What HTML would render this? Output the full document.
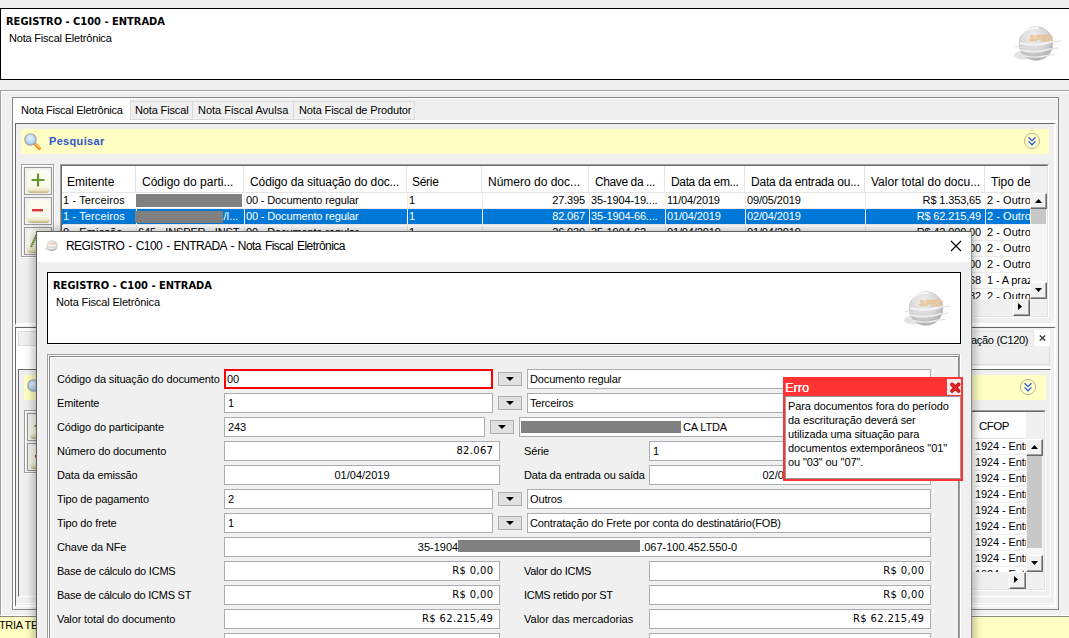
<!DOCTYPE html>
<html lang="pt-BR">
<head>
<meta charset="utf-8">
<title>REGISTRO - C100 - ENTRADA</title>
<style>
*{box-sizing:border-box;margin:0;padding:0}
html,body{width:1069px;height:638px;overflow:hidden;background:#f0f0f0}
body{position:relative;font-family:"Liberation Sans",Arial,sans-serif;font-size:11px;letter-spacing:-0.14px;color:#000;line-height:13px}
.a{position:absolute;white-space:nowrap}
.hl{position:absolute;height:1px}
.vl{position:absolute;width:1px}
.tt{font-family:"DejaVu Sans Condensed","DejaVu Sans","Liberation Sans",sans-serif;font-weight:bold;font-size:11px;letter-spacing:0}
.seg{font-family:"Liberation Sans",sans-serif;font-size:12px;letter-spacing:0}
.hdrbox{position:absolute;background:#fff;border:1px solid #000}
.etch{position:absolute;border:1px solid #a0a0a0;box-shadow:inset 1px 1px 0 #fff,1px 1px 0 #fff}
.yel{position:absolute;background:#ffffc3;border-radius:3px 0 0 0}
.pesq{position:absolute;font-weight:bold;color:#3055cf;font-size:11px;letter-spacing:0.33px}
.btnf{position:absolute;width:28px;height:28px;border:1px solid #9a9a9a;background:#f0f0f0}
.btn{position:absolute;left:1.5px;top:2px;width:23px;height:22.5px;border-radius:4px;background:linear-gradient(#fcfbf1 0%,#faf8e9 72%,#ece6c4 88%,#bfb173 100%)}
.sunk{position:absolute;background:#f0f0f0;border:1px solid #a0a0a0;border-right-color:#fff;border-bottom-color:#fff}
.sunk:before{content:"";position:absolute;left:0;top:0;right:0;bottom:0;border:1px solid #696969;border-right-color:#e3e3e3;border-bottom-color:#e3e3e3}
.th{position:absolute;top:0;height:27px;border-right:1px solid #e5e5e5;border-bottom:1px solid #e5e5e5;font-size:12px;letter-spacing:0;line-height:32px;white-space:nowrap;overflow:hidden;background:#fff;padding-left:6px}
.row{position:absolute;left:1px;height:16px;white-space:nowrap;line-height:15px}
.c{position:absolute;top:0;height:16px;overflow:hidden;white-space:nowrap;border-right:1px solid #ececec;border-bottom:1px solid #ececec;padding-left:1px}
.sel .c{background:#0078d7;color:#fff;border-right-color:#fff}
.r{text-align:right;padding-right:4px;padding-left:0}
.red{position:absolute;background:#808080}
.sb{position:absolute;background:#f0f0f0;border:1px solid #fff;border-right-color:#696969;border-bottom-color:#696969;box-shadow:inset -1px -1px 0 #a0a0a0}
.fld{position:absolute;height:20px;background:#fff;border:1px solid #abadb3;line-height:18px;padding:0 3px;white-space:nowrap;overflow:hidden}
.num{font-family:"DejaVu Sans","Liberation Sans",sans-serif;font-size:10px;letter-spacing:0.32px;text-align:right;padding-right:5.7px;line-height:17px}
.ctr{text-align:center;letter-spacing:0}
.p2{padding-left:2px}
.dd{position:absolute;width:24px;height:14px;border:1px solid #adadad;background:#e1e1e1}
.dd:after{content:"";position:absolute;left:7px;top:4px;border-left:4px solid transparent;border-right:4px solid transparent;border-top:4px solid #000}
.lbl{position:absolute;white-space:nowrap;line-height:13px}
</style>
</head>
<body>

<!-- ===== main window header ===== -->
<div class="hdrbox" style="left:0;top:8px;width:1071px;height:72px"></div>
<div class="a tt" style="left:6px;top:15px">REGISTRO - C100 - ENTRADA</div>
<div class="a" style="left:9px;top:32px;letter-spacing:-0.2px">Nota Fiscal Eletrônica</div>
<svg class="a" style="left:1010px;top:20px" width="56" height="46" viewBox="0 0 56 46">
  <defs>
    <radialGradient id="sg" cx="42%" cy="30%" r="75%"><stop offset="0" stop-color="#f0f0f0"/><stop offset="0.55" stop-color="#d8d8d8"/><stop offset="1" stop-color="#a6a6a6"/></radialGradient>
  </defs>
  <ellipse cx="15" cy="35" rx="11" ry="4.5" fill="#e3e3e3"/>
  <circle cx="26" cy="23.5" r="16.8" fill="url(#sg)" stroke="#b9b9b9" stroke-width="0.7"/>
  <path d="M11 14 Q18 7 28 8" stroke="#fdfdfd" stroke-width="2.4" fill="none" stroke-linecap="round" opacity=".8"/>
  <path d="M9.5 23 Q26 27 42.5 21.5" stroke="#f3f3f3" stroke-width="2" fill="none"/>
  <path d="M10.5 29.8 Q26 34 41.5 28.5" stroke="#efefef" stroke-width="1.8" fill="none"/>
  <path d="M13 35.5 Q26 39 38.5 35" stroke="#ebebeb" stroke-width="1.4" fill="none"/>
  <path d="M5 26.5 L18 28 M41 22 L51 21 M40 29 L48 28 M36 35.5 L45 34.5" stroke="#dedede" stroke-width="1.1"/>
  <text x="19.5" y="20.5" font-family="Liberation Sans,sans-serif" font-size="8.5" font-weight="bold" font-style="italic" fill="#fbf1e2" stroke="#e3ad6c" stroke-width="0.55" letter-spacing="0">SPED</text>
</svg>

<!-- ===== outer etched panel ===== -->
<div class="etch" style="left:0;top:90px;width:1100px;height:526px"></div>

<!-- tab panel border -->
<div class="a" style="left:12px;top:97px;width:1047px;height:513px;border:1px solid #828790;box-shadow:inset 1px 1px 0 #fff"></div>

<!-- tabs -->
<div class="a" style="left:130px;top:101px;width:285px;height:19px;border:1px solid #d9d9d9;border-left:0;background:#f0f0f0"></div>
<div class="vl" style="left:192px;top:101px;height:19px;background:#d9d9d9"></div>
<div class="vl" style="left:293px;top:101px;height:19px;background:#d9d9d9"></div>
<div class="a" style="left:13px;top:98px;width:118px;height:24px;background:#fff;border-right:1px solid #d9d9d9"></div><div class="hl" style="left:13px;top:98px;width:1045px;background:#fff"></div>
<div class="a" style="left:21px;top:104px;letter-spacing:-0.24px">Nota Fiscal Eletrônica</div>
<div class="a" style="left:135px;top:104px">Nota Fiscal</div>
<div class="a" style="left:198px;top:104px;letter-spacing:0">Nota Fiscal Avulsa</div>
<div class="a" style="left:299px;top:104px">Nota Fiscal de Produtor</div>

<!-- content pane 1 -->
<div class="a" style="left:13px;top:120px;width:1044px;height:3px;background:#fff"></div>
<div class="a" style="left:13px;top:120px;width:2px;height:488px;background:#fff"></div>
<div class="a" style="left:15px;top:123px;width:1041px;height:203px;border:1px solid #696969;border-right:2px solid #fff;border-bottom:3px solid #fff;background:#f0f0f0"></div>

<!-- search bar 1 -->
<div class="yel" style="left:21px;top:129px;width:1028px;height:25px"></div>
<svg class="a" style="left:23px;top:132px" width="20" height="20" viewBox="0 0 20 20">
  <defs><radialGradient id="mg" cx="45%" cy="35%" r="60%"><stop offset="0" stop-color="#eaf5ff"/><stop offset="1" stop-color="#9fccf5"/></radialGradient></defs>
  <line x1="12" y1="12" x2="16.3" y2="16.3" stroke="#ef8e14" stroke-width="3.2" stroke-linecap="round"/>
  <line x1="12.3" y1="11.7" x2="16.6" y2="16" stroke="#ffe6a6" stroke-width="1"/>
  <circle cx="7.5" cy="7.5" r="5.6" fill="url(#mg)" stroke="#a9a9b5" stroke-width="1.4"/>
</svg>
<div class="pesq" style="left:49px;top:135px">Pesquisar</div>
<svg class="a" style="left:1023px;top:132px" width="18" height="18" viewBox="0 0 18 18">
  <circle cx="9" cy="9" r="7.6" fill="#ffffca" stroke="#b1ae8b" stroke-width="0.9"/>
  <path d="M5.5 5.3 L9 8.7 L12.5 5.3 M5.5 9.4 L9 12.8 L12.5 9.4" stroke="#2a58cf" stroke-width="1.25" fill="none"/>
</svg>

<!-- toolbar 1 -->
<div class="etch" style="left:21px;top:164px;width:33px;height:93px"></div>
<div class="btnf" style="left:24px;top:167px"><div class="btn"></div>
  <svg class="a" style="left:6px;top:5px" width="14" height="14"><path d="M7 0.5V13.5M0.5 7H13.5" stroke="#62992a" stroke-width="2.2"/></svg></div>
<div class="btnf" style="left:24px;top:197px"><div class="btn"></div>
  <svg class="a" style="left:7px;top:11px" width="12" height="3"><rect width="11" height="2.4" fill="#e0353b"/></svg></div>
<div class="btnf" style="left:24px;top:227px"><div class="btn"></div>
  <svg class="a" style="left:4px;top:2px" width="18" height="20"><path d="M2 17 L9 2" stroke="#62992a" stroke-width="2.2" stroke-dasharray="1.6 0.6"/></svg></div>

<!-- table 1 -->
<div class="sunk" style="left:60px;top:164px;width:989px;height:154px" id="t1">
 <div class="a" style="left:1px;top:1px;width:968px;height:133px;overflow:hidden;background:#fff" id="t1v">
  <div class="th" style="left:0;width:74px;padding-left:5px">Emitente</div>
  <div class="th" style="left:74px;width:108px">Código do parti...</div>
  <div class="th" style="left:182px;width:163px;letter-spacing:-0.1px">Código da situação do doc...</div>
  <div class="th" style="left:345px;width:75px;padding-left:5px;letter-spacing:-0.3px">Série</div>
  <div class="th" style="left:420px;width:107px">Número do doc...</div>
  <div class="th" style="left:527px;width:76px;letter-spacing:-0.4px">Chave da ...</div>
  <div class="th" style="left:603px;width:80px;letter-spacing:-0.35px">Data da em...</div>
  <div class="th" style="left:683px;width:120px;letter-spacing:-0.2px">Data da entrada ou...</div>
  <div class="th" style="left:803px;width:120px">Valor total do docu...</div>
  <div class="th" style="left:923px;width:60px;border-right:0">Tipo de</div>

  <div class="row" style="top:27px;width:968px">
   <div class="c" style="left:0;width:74px;padding-left:0;letter-spacing:0.12px">1 - Terceiros</div><div class="c" style="left:74px;width:108px"></div><div class="c" style="left:182px;width:163px">00 - Documento regular</div><div class="c" style="left:345px;width:75px">1</div><div class="c r" style="left:420px;width:107px">27.395</div><div class="c" style="left:527px;width:76px">35-1904-19....</div><div class="c" style="left:603px;width:80px">11/04/2019</div><div class="c" style="left:683px;width:120px">09/05/2019</div><div class="c r" style="left:803px;width:120px">R$ 1.353,65</div><div class="c" style="left:923px;width:60px;letter-spacing:0.05px">2 - Outros</div>
  </div>
  <div class="row sel" style="top:43px;width:968px">
   <div class="c" style="left:0;width:74px;padding-left:0;letter-spacing:0.12px;box-shadow:-1px 0 0 #0078d7">1 - Terceiros</div><div class="c" style="left:74px;width:108px;text-align:right;padding-right:6px">/I...</div><div class="c" style="left:182px;width:163px">00 - Documento regular</div><div class="c" style="left:345px;width:75px">1</div><div class="c r" style="left:420px;width:107px">82.067</div><div class="c" style="left:527px;width:76px">35-1904-66....</div><div class="c" style="left:603px;width:80px">01/04/2019</div><div class="c" style="left:683px;width:120px">02/04/2019</div><div class="c r" style="left:803px;width:120px">R$ 62.215,49</div><div class="c" style="left:923px;width:60px;border-right:0;letter-spacing:0.05px">2 - Outros</div>
  </div>
  <div class="row" style="top:59px;width:968px">
   <div class="c" style="left:0;width:74px;padding-left:0;letter-spacing:0.12px">0 - Emissão</div><div class="c" style="left:74px;width:108px">645 - INSPER - INST...</div><div class="c" style="left:182px;width:163px">00 - Documento regular</div><div class="c" style="left:345px;width:75px">1</div><div class="c r" style="left:420px;width:107px">26.039</div><div class="c" style="left:527px;width:76px">35-1904-62....</div><div class="c" style="left:603px;width:80px">01/04/2019</div><div class="c" style="left:683px;width:120px">01/04/2019</div><div class="c r" style="left:803px;width:120px">R$ 42.000,00</div><div class="c" style="left:923px;width:60px;letter-spacing:0.05px">2 - Outros</div>
  </div>
  <div class="row" style="top:75px;width:968px"><div class="c r" style="left:803px;width:120px">R$ 1.200,00</div><div class="c" style="left:923px;width:60px;letter-spacing:0.05px">2 - Outros</div></div>
  <div class="row" style="top:91px;width:968px"><div class="c r" style="left:803px;width:120px">R$ 3.500,00</div><div class="c" style="left:923px;width:60px;letter-spacing:0.05px">2 - Outros</div></div>
  <div class="row" style="top:107px;width:968px"><div class="c r" style="left:803px;width:120px">R$ 845,68</div><div class="c" style="left:923px;width:60px;letter-spacing:-0.12px">1 - A prazo</div></div>
  <div class="row" style="top:123px;width:968px"><div class="c r" style="left:803px;width:120px">R$ 2.310,82</div><div class="c" style="left:923px;width:60px;letter-spacing:0.05px">2 - Outros</div></div>
 </div>
 <div class="red" style="left:75px;top:29px;width:106px;height:13px"></div>
 <div class="red" style="left:74px;top:46px;width:88px;height:12px"></div>
 <!-- vertical scrollbar -->
 <div class="a" style="left:969px;top:28px;width:17px;height:106px;background:#f7f7f7"></div>

 <div class="sb" style="left:969px;top:28px;width:17px;height:16px"><svg class="a" style="left:4px;top:5px" width="7" height="4"><path d="M0 4L3.5 0L7 4Z"/></svg></div>
 <div class="a" style="left:970px;top:44px;width:15px;height:15px;background:#c8c8c8"></div>
 <div class="sb" style="left:969px;top:117px;width:17px;height:17px"><svg class="a" style="left:4px;top:5px" width="7" height="4"><path d="M0 0L3.5 4L7 0Z"/></svg></div>
 <div class="sb" style="left:952px;top:134px;width:17px;height:17px"><svg class="a" style="left:4px;top:3px" width="4" height="7"><path d="M0 0L4 3.5L0 7Z"/></svg></div>
</div>

<!-- ===== lower pane (behind dialog) ===== -->

<div class="a" style="left:15px;top:327px;width:1041px;height:280px;border:1px solid #696969;border-right:2px solid #fff;border-bottom:2px solid #fff;background:#f0f0f0"></div><div class="a" style="left:16px;top:328px;width:484px;height:41px;background:#fff"></div><div class="a" style="left:16px;top:366px;width:1035px;height:3px;background:#fff"></div><div class="hl" style="left:16px;top:603px;width:1036px;background:#fff"></div>
<div class="a" style="left:18px;top:331px;width:1016px;height:15px;border:1px solid #dcdcdc;background:#f0f0f0"></div><div class="a" style="left:500px;top:331px;width:534px;height:16px;border:1px solid #e6e6e6;background:#f0f0f0"></div>
<div class="a" style="left:500px;top:347px;width:550px;height:18px;border:1px solid #dcdcdc;border-top:0;background:#f0f0f0"></div>
<div class="a" style="left:18px;top:369px;width:1033px;height:228px;border:1px solid #696969;border-right-color:#fff;border-bottom-color:#fff;background:#f0f0f0"></div>
<div class="yel" style="left:24px;top:375px;width:1022px;height:25px"></div>
<svg class="a" style="left:26px;top:378px" width="20" height="20" viewBox="0 0 20 20">
  <line x1="12" y1="12" x2="16.3" y2="16.3" stroke="#ef8e14" stroke-width="3.2" stroke-linecap="round"/>
  <circle cx="7.5" cy="7.5" r="5.6" fill="url(#mg)" stroke="#a9a9b5" stroke-width="1.4"/>
</svg>
<svg class="a" style="left:1019px;top:378px" width="18" height="18" viewBox="0 0 18 18">
  <circle cx="9" cy="9" r="7.6" fill="#ffffca" stroke="#b1ae8b" stroke-width="0.9"/>
  <path d="M5.5 5.3 L9 8.7 L12.5 5.3 M5.5 9.4 L9 12.8 L12.5 9.4" stroke="#2a58cf" stroke-width="1.25" fill="none"/>
</svg>
<div class="etch" style="left:24px;top:410px;width:33px;height:63px"></div>
<div class="btnf" style="left:27px;top:413px"><div class="btn"></div>
  <svg class="a" style="left:6px;top:5px" width="14" height="14"><path d="M7 0.5V13.5M0.5 7H13.5" stroke="#62992a" stroke-width="2.2"/></svg></div>
<div class="btnf" style="left:27px;top:443px"><div class="btn"></div>
  <svg class="a" style="left:7px;top:11px" width="12" height="3"><rect width="11" height="2.4" fill="#e0353b"/></svg></div>

<!-- tab label of lower pane, right side -->
<div class="a" style="left:971px;top:334px;letter-spacing:-0.3px">ação (C120)</div>
<div class="a" style="left:1034px;top:330px;width:16px;height:16px;background:#fff"></div>
<svg class="a" style="left:1038.5px;top:335px" width="7" height="6"><path d="M0.8 0.5L6.2 5.5M6.2 0.5L0.8 5.5" stroke="#444" stroke-width="1.5"/></svg>

<!-- table 2 (right part) -->
<div class="sunk" style="left:700px;top:410px;width:346px;height:181px">
 <div class="a" style="left:1px;top:1px;width:324px;height:160px;overflow:hidden;background:#fff">
  <div class="th" style="left:0;width:271px"></div>
  <div class="th" style="left:271px;width:60px;border-right:0;line-height:29px;letter-spacing:-0.5px;font-size:11.5px">CFOP</div>
  <div class="row" style="top:27px;width:330px"><div class="c" style="left:271px;width:60px;padding-left:1px;letter-spacing:-0.1px">1924 - Entrada</div></div>
  <div class="row" style="top:43px;width:330px"><div class="c" style="left:271px;width:60px;padding-left:1px;letter-spacing:-0.1px">1924 - Entrada</div></div>
  <div class="row" style="top:59px;width:330px"><div class="c" style="left:271px;width:60px;padding-left:1px;letter-spacing:-0.1px">1924 - Entrada</div></div>
  <div class="row" style="top:75px;width:330px"><div class="c" style="left:271px;width:60px;padding-left:1px;letter-spacing:-0.1px">1924 - Entrada</div></div>
  <div class="row" style="top:91px;width:330px"><div class="c" style="left:271px;width:60px;padding-left:1px;letter-spacing:-0.1px">1924 - Entrada</div></div>
  <div class="row" style="top:107px;width:330px"><div class="c" style="left:271px;width:60px;padding-left:1px;letter-spacing:-0.1px">1924 - Entrada</div></div>
  <div class="row" style="top:123px;width:330px"><div class="c" style="left:271px;width:60px;padding-left:1px;letter-spacing:-0.1px">1924 - Entrada</div></div>
  <div class="row" style="top:139px;width:330px"><div class="c" style="left:271px;width:60px;padding-left:1px;letter-spacing:-0.1px">1924 - Entrada</div></div>
  <div class="row" style="top:155px;width:330px"><div class="c" style="left:271px;width:60px;padding-left:1px;letter-spacing:-0.1px">1924 - Entrada</div></div>
 </div>
 <div class="a" style="left:325px;top:28px;width:17px;height:133px;background:#f7f7f7"></div>
 <div class="sb" style="left:325px;top:28px;width:17px;height:17px"><svg class="a" style="left:4px;top:5px" width="7" height="4"><path d="M0 4L3.5 0L7 4Z"/></svg></div>
 <div class="a" style="left:326px;top:45px;width:15px;height:92px;background:#c8c8c8"></div>
 <div class="sb" style="left:325px;top:144px;width:17px;height:17px"><svg class="a" style="left:4px;top:5px" width="7" height="4"><path d="M0 0L3.5 4L7 0Z"/></svg></div>
 <div class="sb" style="left:308px;top:161px;width:17px;height:17px"><svg class="a" style="left:4px;top:3px" width="4" height="7"><path d="M0 0L4 3.5L0 7Z"/></svg></div>
</div>

<!-- status bar -->
<div class="hl" style="left:0;top:615px;width:1069px;background:#fff"></div><div class="hl" style="left:0;top:616px;width:1069px;background:#8c8c8c"></div><div class="a" style="left:0;top:617px;width:1069px;height:21px;background:#ffffc3"></div>
<div class="a" style="left:-1px;top:619px;font-size:11px;letter-spacing:-0.35px">TRIA TEXTIL</div>

<!-- ===== dialog ===== -->
<div class="a" id="dlg" style="left:36px;top:231px;width:936px;height:420px;background:#f0f0f0;border:1px solid #5f5f5f;border-right-color:#8c8c8c;box-shadow:0 1px 10px 1px rgba(0,0,0,.36)"></div>
<div class="a" style="left:37px;top:232px;width:934px;height:30px;background:#fff"></div>
<svg class="a" style="left:44px;top:238px" width="16" height="15" viewBox="0 0 16 15">
  <ellipse cx="5" cy="11" rx="4" ry="1.6" fill="#e4e4e4"/>
  <circle cx="8" cy="7.5" r="5.6" fill="url(#sg)"/>
  <path d="M3 7.3 Q8 9 13 7" stroke="#f8f8f8" stroke-width="1" fill="none"/>
  <path d="M3.5 10 Q8 11.5 12.5 9.7" stroke="#f4f4f4" stroke-width="0.9" fill="none"/>
  <rect x="6" y="4.6" width="6" height="1.8" fill="#f1c993" opacity=".8"/>
</svg>
<div class="a seg" style="left:66px;top:240px;font-size:12px;letter-spacing:-0.55px;word-spacing:1.2px">REGISTRO - C100 - ENTRADA - Nota Fiscal Eletrônica</div>
<svg class="a" style="left:950px;top:240px" width="12" height="12"><path d="M1 1L11 11M11 1L1 11" stroke="#000" stroke-width="1.1"/></svg>
<div class="hdrbox" style="left:47px;top:272px;width:914px;height:72px"></div>
<div class="hl" style="left:47px;top:344px;width:914px;background:#fafafa"></div>
<div class="a tt" style="left:53px;top:279px">REGISTRO - C100 - ENTRADA</div>
<div class="a" style="left:56px;top:296px">Nota Fiscal Eletrônica</div>
<svg class="a" style="left:900px;top:285px" width="56" height="46" viewBox="0 0 56 46">
  <ellipse cx="15" cy="35" rx="11" ry="4.5" fill="#e3e3e3"/>
  <circle cx="26" cy="23.5" r="16.8" fill="url(#sg)" stroke="#b9b9b9" stroke-width="0.7"/>
  <path d="M11 14 Q18 7 28 8" stroke="#fdfdfd" stroke-width="2.4" fill="none" stroke-linecap="round" opacity=".8"/>
  <path d="M9.5 23 Q26 27 42.5 21.5" stroke="#f3f3f3" stroke-width="2" fill="none"/>
  <path d="M10.5 29.8 Q26 34 41.5 28.5" stroke="#efefef" stroke-width="1.8" fill="none"/>
  <path d="M13 35.5 Q26 39 38.5 35" stroke="#ebebeb" stroke-width="1.4" fill="none"/>
  <path d="M5 26.5 L18 28 M41 22 L51 21 M40 29 L48 28 M36 35.5 L45 34.5" stroke="#dedede" stroke-width="1.1"/>
  <text x="19.5" y="20.5" font-family="Liberation Sans,sans-serif" font-size="8.5" font-weight="bold" font-style="italic" fill="#fbf1e2" stroke="#e3ad6c" stroke-width="0.55" letter-spacing="0">SPED</text>
</svg>
<div class="a" style="left:47px;top:354px;width:913px;height:300px;border:1px solid #a0a0a0;box-shadow:inset 1px 1px 0 #fff,1px 0 0 #fff"></div>
<div class="a" style="left:49px;top:356px;width:910px;height:300px;border:1px solid #828790;box-shadow:inset 1px 1px 0 #fff"></div>
<div class="lbl" style="left:57px;top:373px">Código da situação do documento</div>
<div class="fld " style="left:224px;top:369px;width:269px;border:2px solid #f00;padding:0 1px;line-height:16px">00</div>
<div class="dd" style="left:498px;top:372px"></div>
<div class="fld p2" style="left:527px;top:369px;width:404px;">Documento regular</div>
<div class="lbl" style="left:57px;top:397px">Emitente</div>
<div class="fld " style="left:224px;top:393px;width:269px;">1</div>
<div class="dd" style="left:498px;top:396px"></div>
<div class="fld p2" style="left:527px;top:393px;width:404px;">Terceiros</div>
<div class="lbl" style="left:57px;top:421px">Código do participante</div>
<div class="fld " style="left:224px;top:417px;width:261px;">243</div>
<div class="dd" style="left:490px;top:420px"></div>
<div class="fld " style="left:519px;top:417px;width:412px;"><span style="display:inline-block;width:160px"></span>CA LTDA</div>
<div class="red" style="left:521px;top:421px;width:160px;height:12px"></div>
<div class="lbl" style="left:57px;top:445px">Número do documento</div>
<div class="fld num" style="left:224px;top:441px;width:276px;">82.067</div>
<div class="lbl" style="left:524px;top:445px">Série</div>
<div class="fld " style="left:649px;top:441px;width:282px;">1</div>
<div class="lbl" style="left:57px;top:469px">Data da emissão</div>
<div class="fld ctr" style="left:224px;top:465px;width:276px;">01/04/2019</div>
<div class="lbl" style="left:524px;top:469px">Data da entrada ou saída</div>
<div class="fld ctr" style="left:649px;top:465px;width:282px;">02/04/2019</div>
<div class="lbl" style="left:57px;top:493px">Tipo de pagamento</div>
<div class="fld " style="left:224px;top:489px;width:269px;">2</div>
<div class="dd" style="left:498px;top:492px"></div>
<div class="fld p2" style="left:527px;top:489px;width:404px;">Outros</div>
<div class="lbl" style="left:57px;top:517px">Tipo do frete</div>
<div class="fld " style="left:224px;top:513px;width:269px;">1</div>
<div class="dd" style="left:498px;top:516px"></div>
<div class="fld p2" style="left:527px;top:513px;width:404px;">Contratação do Frete por conta do destinatário(FOB)</div>
<div class="lbl" style="left:57px;top:541px">Chave da NFe</div>
<div class="fld ctr" style="left:224px;top:537px;width:707px;">35-1904<span style="display:inline-block;width:183px"></span>.067-100.452.550-0</div>
<div class="red" style="left:458px;top:540px;width:182px;height:12px"></div>
<div class="lbl" style="left:57px;top:565px;letter-spacing:-0.22px">Base de cálculo do ICMS</div>
<div class="fld num" style="left:224px;top:561px;width:276px;">R$ 0,00</div>
<div class="lbl" style="left:524px;top:565px;letter-spacing:-0.28px">Valor do ICMS</div>
<div class="fld num" style="left:649px;top:561px;width:282px;">R$ 0,00</div>
<div class="lbl" style="left:57px;top:589px;letter-spacing:-0.25px">Base de cálculo do ICMS ST</div>
<div class="fld num" style="left:224px;top:585px;width:276px;">R$ 0,00</div>
<div class="lbl" style="left:524px;top:589px;letter-spacing:-0.3px">ICMS retido por ST</div>
<div class="fld num" style="left:649px;top:585px;width:282px;">R$ 0,00</div>
<div class="lbl" style="left:57px;top:613px">Valor total do documento</div>
<div class="fld num" style="left:224px;top:609px;width:276px;">R$ 62.215,49</div>
<div class="lbl" style="left:524px;top:613px;letter-spacing:0px">Valor das mercadorias</div>
<div class="fld num" style="left:649px;top:609px;width:282px;">R$ 62.215,49</div>
<div class="fld num" style="left:224px;top:633px;width:276px;"></div>
<div class="fld num" style="left:649px;top:633px;width:282px;"></div>

<!-- error popup -->
<div class="a" style="left:783px;top:377px;width:180px;height:104px;background:#ff3333"></div>
<div class="a" style="left:785px;top:396px;width:176px;height:83px;background:#fff;border:1px solid #9b9b9b"></div>
<div class="a seg" style="left:785px;top:381.5px;color:#fff;font-size:12.5px;letter-spacing:0.1px;text-shadow:0.4px 0 0 #fff">Erro</div>
<div class="a" style="left:947px;top:379px;width:14px;height:16px;background:#f4eaea"></div>
<svg class="a" style="left:949px;top:381px" width="13" height="13" viewBox="0 0 13 13"><path d="M3 3.4L9.6 10M9.6 3.4L3 10" stroke="#a81616" stroke-width="3.8" stroke-linecap="round"/><path d="M3 3.4L9.6 10M9.6 3.4L3 10" stroke="#ea2222" stroke-width="2.2" stroke-linecap="round"/></svg>
<div class="a" style="left:788px;top:399px;line-height:14px;white-space:normal;width:170px;letter-spacing:-0.1px">Para documentos fora do período da escrituração deverá ser utilizada uma situação para documentos extemporâneos "01" ou "03" ou "07".</div>

</body>
</html>
